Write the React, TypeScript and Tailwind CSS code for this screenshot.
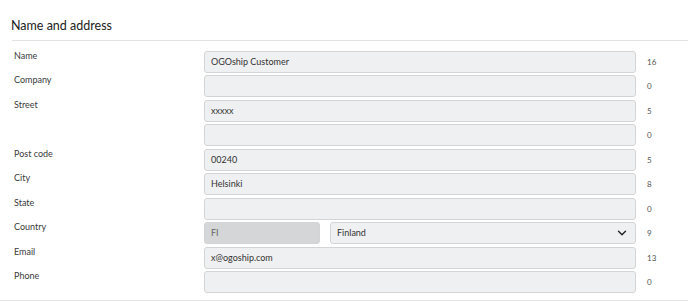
import { ChevronDown } from 'lucide-react';

interface Field {
  label: string;
  value: string;
  count: number;
}

const fields: Field[] = [
  { label: 'Name', value: 'OGOship Customer', count: 16 },
  { label: 'Company', value: '', count: 0 },
  { label: 'Street', value: 'xxxxx', count: 5 },
  { label: '', value: '', count: 0 },
  { label: 'Post code', value: '00240', count: 5 },
  { label: 'City', value: 'Helsinki', count: 8 },
  { label: 'State', value: '', count: 0 },
  { label: 'Country', value: 'FI', count: 9 },
  { label: 'Email', value: 'x@ogoship.com', count: 13 },
  { label: 'Phone', value: '', count: 0 },
];

const boxCls =
  'h-[22px] rounded-[3px] border border-[#d3d4d5] px-[6px] flex items-center text-[9px] text-[#333]';

const Row = ({ field }: { field: Field }) => {
  return (
    <div className="flex h-[24.45px] items-start">
      <div className="-mt-[1px] w-[204px] pl-[14px] text-[9px] leading-[12px] text-[#3a3a3a]">
        {field.label}
      </div>
      {field.label === 'Country' ? (
        <div className="flex w-[432px] gap-[10px]">
          <div className={`${boxCls} w-[116px] bg-[#d5d6d7] text-[#666]`}>{field.value}</div>
          <div className={`${boxCls} flex-1 justify-between bg-[#eff0f1]`}>
            <span>Finland</span>
            <ChevronDown size={14} strokeWidth={2.4} className="text-[#222]" />
          </div>
        </div>
      ) : (
        <div className={`${boxCls} w-[432px] bg-[#eff0f1]`}>{field.value}</div>
      )}
      <div className="flex h-[22px] items-center pl-[11px] text-[8px] text-[#555]">{field.count}</div>
    </div>
  );
};

const App = () => {
  return (
    <div className="h-[302px] w-[688px] overflow-hidden bg-white font-['Lato','Liberation_Sans',sans-serif]">
      <div className="flex h-[40px] items-center pl-[11px] pt-[12px] text-[12.5px] text-[#222]">
        Name and address
      </div>
      <div className="ml-[12px] border-t border-[#e3e3e3]" />
      <div className="pt-[10px]">
        {fields.map((f, i) => (
          <Row key={i} field={f} />
        ))}
      </div>
      <div className="mt-[5px] border-t border-[#e6e6e6]" />
    </div>
  );
};

export default App;
